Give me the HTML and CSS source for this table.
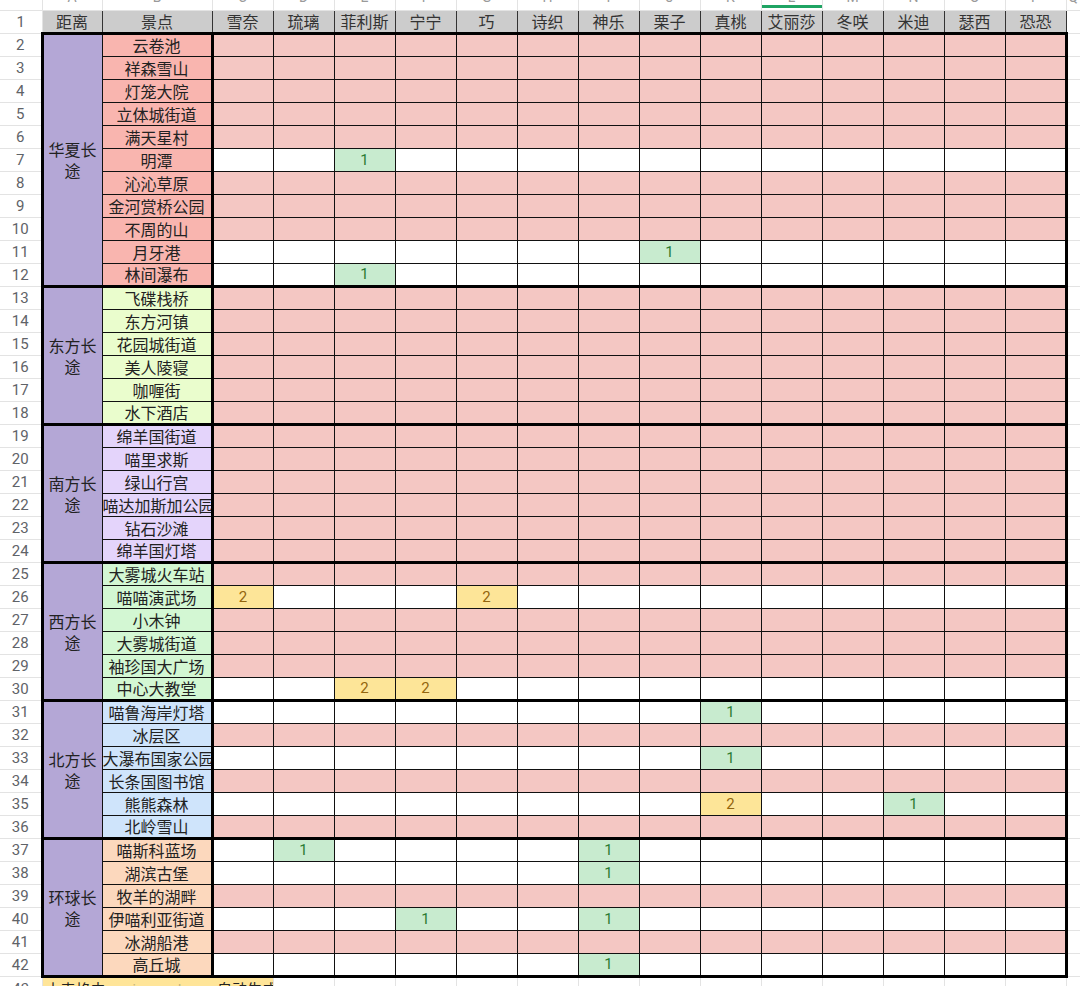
FILE: index.html
```html
<!DOCTYPE html>
<html lang="zh">
<head>
<meta charset="utf-8">
<title>长途景点表</title>
<link rel="stylesheet" href="styles.css">
</head>
<body>
<table class="sheet">
<colgroup>
<col class="w-rn"><col class="w-a"><col class="w-b">
<col class="w-d"><col class="w-d"><col class="w-d"><col class="w-d"><col class="w-d"><col class="w-d"><col class="w-d">
<col class="w-d"><col class="w-d"><col class="w-d"><col class="w-d"><col class="w-d"><col class="w-d"><col class="w-d">
<col class="w-f">
</colgroup>
<tr class="lt"><th></th><th><span>A</span></th><th><span>B</span></th><th><span>C</span></th><th><span>D</span></th><th><span>E</span></th><th><span>F</span></th><th><span>G</span></th><th><span>H</span></th><th><span>I</span></th><th><span>J</span></th><th><span>K</span></th><th class="sel"><span>L</span></th><th><span>M</span></th><th><span>N</span></th><th><span>O</span></th><th><span>P</span></th><th><span>Q</span></th></tr>
<tr class="hd"><th>1</th><td>距离</td><td>景点</td><td>雪奈</td><td>琉璃</td><td>菲利斯</td><td>宁宁</td><td>巧</td><td>诗织</td><td>神乐</td><td>栗子</td><td>真桃</td><td>艾丽莎</td><td>冬咲</td><td>米迪</td><td>瑟西</td><td>恐恐</td><th class="f"></th></tr>

<tr class="p c1"><th>2</th><td class="cat" rowspan="11">华夏长途</td><td class="nm">云卷池</td><td></td><td></td><td></td><td></td><td></td><td></td><td></td><td></td><td></td><td></td><td></td><td></td><td></td><td></td><th class="f"></th></tr>
<tr class="p c1"><th>3</th><td class="nm">祥森雪山</td><td></td><td></td><td></td><td></td><td></td><td></td><td></td><td></td><td></td><td></td><td></td><td></td><td></td><td></td><th class="f"></th></tr>
<tr class="p c1"><th>4</th><td class="nm">灯笼大院</td><td></td><td></td><td></td><td></td><td></td><td></td><td></td><td></td><td></td><td></td><td></td><td></td><td></td><td></td><th class="f"></th></tr>
<tr class="p c1"><th>5</th><td class="nm">立体城街道</td><td></td><td></td><td></td><td></td><td></td><td></td><td></td><td></td><td></td><td></td><td></td><td></td><td></td><td></td><th class="f"></th></tr>
<tr class="p c1"><th>6</th><td class="nm">满天星村</td><td></td><td></td><td></td><td></td><td></td><td></td><td></td><td></td><td></td><td></td><td></td><td></td><td></td><td></td><th class="f"></th></tr>
<tr class="w c1"><th>7</th><td class="nm">明潭</td><td></td><td></td><td class="g">1</td><td></td><td></td><td></td><td></td><td></td><td></td><td></td><td></td><td></td><td></td><td></td><th class="f"></th></tr>
<tr class="p c1"><th>8</th><td class="nm">沁沁草原</td><td></td><td></td><td></td><td></td><td></td><td></td><td></td><td></td><td></td><td></td><td></td><td></td><td></td><td></td><th class="f"></th></tr>
<tr class="p c1"><th>9</th><td class="nm">金河赏桥公园</td><td></td><td></td><td></td><td></td><td></td><td></td><td></td><td></td><td></td><td></td><td></td><td></td><td></td><td></td><th class="f"></th></tr>
<tr class="p c1"><th>10</th><td class="nm">不周的山</td><td></td><td></td><td></td><td></td><td></td><td></td><td></td><td></td><td></td><td></td><td></td><td></td><td></td><td></td><th class="f"></th></tr>
<tr class="w c1"><th>11</th><td class="nm">月牙港</td><td></td><td></td><td></td><td></td><td></td><td></td><td></td><td class="g">1</td><td></td><td></td><td></td><td></td><td></td><td></td><th class="f"></th></tr>
<tr class="w c1"><th>12</th><td class="nm">林间瀑布</td><td></td><td></td><td class="g">1</td><td></td><td></td><td></td><td></td><td></td><td></td><td></td><td></td><td></td><td></td><td></td><th class="f"></th></tr>

<tr class="p c2 gs"><th>13</th><td class="cat" rowspan="6">东方长途</td><td class="nm">飞碟栈桥</td><td></td><td></td><td></td><td></td><td></td><td></td><td></td><td></td><td></td><td></td><td></td><td></td><td></td><td></td><th class="f"></th></tr>
<tr class="p c2"><th>14</th><td class="nm">东方河镇</td><td></td><td></td><td></td><td></td><td></td><td></td><td></td><td></td><td></td><td></td><td></td><td></td><td></td><td></td><th class="f"></th></tr>
<tr class="p c2"><th>15</th><td class="nm">花园城街道</td><td></td><td></td><td></td><td></td><td></td><td></td><td></td><td></td><td></td><td></td><td></td><td></td><td></td><td></td><th class="f"></th></tr>
<tr class="p c2"><th>16</th><td class="nm">美人陵寝</td><td></td><td></td><td></td><td></td><td></td><td></td><td></td><td></td><td></td><td></td><td></td><td></td><td></td><td></td><th class="f"></th></tr>
<tr class="p c2"><th>17</th><td class="nm">咖喱街</td><td></td><td></td><td></td><td></td><td></td><td></td><td></td><td></td><td></td><td></td><td></td><td></td><td></td><td></td><th class="f"></th></tr>
<tr class="p c2"><th>18</th><td class="nm">水下酒店</td><td></td><td></td><td></td><td></td><td></td><td></td><td></td><td></td><td></td><td></td><td></td><td></td><td></td><td></td><th class="f"></th></tr>

<tr class="p c3 gs"><th>19</th><td class="cat" rowspan="6">南方长途</td><td class="nm">绵羊国街道</td><td></td><td></td><td></td><td></td><td></td><td></td><td></td><td></td><td></td><td></td><td></td><td></td><td></td><td></td><th class="f"></th></tr>
<tr class="p c3"><th>20</th><td class="nm">喵里求斯</td><td></td><td></td><td></td><td></td><td></td><td></td><td></td><td></td><td></td><td></td><td></td><td></td><td></td><td></td><th class="f"></th></tr>
<tr class="p c3"><th>21</th><td class="nm">绿山行宫</td><td></td><td></td><td></td><td></td><td></td><td></td><td></td><td></td><td></td><td></td><td></td><td></td><td></td><td></td><th class="f"></th></tr>
<tr class="p c3"><th>22</th><td class="nm">喵达加斯加公园</td><td></td><td></td><td></td><td></td><td></td><td></td><td></td><td></td><td></td><td></td><td></td><td></td><td></td><td></td><th class="f"></th></tr>
<tr class="p c3"><th>23</th><td class="nm">钻石沙滩</td><td></td><td></td><td></td><td></td><td></td><td></td><td></td><td></td><td></td><td></td><td></td><td></td><td></td><td></td><th class="f"></th></tr>
<tr class="p c3"><th>24</th><td class="nm">绵羊国灯塔</td><td></td><td></td><td></td><td></td><td></td><td></td><td></td><td></td><td></td><td></td><td></td><td></td><td></td><td></td><th class="f"></th></tr>

<tr class="p c4 gs"><th>25</th><td class="cat" rowspan="6">西方长途</td><td class="nm">大雾城火车站</td><td></td><td></td><td></td><td></td><td></td><td></td><td></td><td></td><td></td><td></td><td></td><td></td><td></td><td></td><th class="f"></th></tr>
<tr class="w c4"><th>26</th><td class="nm">喵喵演武场</td><td class="y">2</td><td></td><td></td><td></td><td class="y">2</td><td></td><td></td><td></td><td></td><td></td><td></td><td></td><td></td><td></td><th class="f"></th></tr>
<tr class="p c4"><th>27</th><td class="nm">小木钟</td><td></td><td></td><td></td><td></td><td></td><td></td><td></td><td></td><td></td><td></td><td></td><td></td><td></td><td></td><th class="f"></th></tr>
<tr class="p c4"><th>28</th><td class="nm">大雾城街道</td><td></td><td></td><td></td><td></td><td></td><td></td><td></td><td></td><td></td><td></td><td></td><td></td><td></td><td></td><th class="f"></th></tr>
<tr class="p c4"><th>29</th><td class="nm">袖珍国大广场</td><td></td><td></td><td></td><td></td><td></td><td></td><td></td><td></td><td></td><td></td><td></td><td></td><td></td><td></td><th class="f"></th></tr>
<tr class="w c4"><th>30</th><td class="nm">中心大教堂</td><td></td><td></td><td class="y">2</td><td class="y">2</td><td></td><td></td><td></td><td></td><td></td><td></td><td></td><td></td><td></td><td></td><th class="f"></th></tr>

<tr class="w c5 gs"><th>31</th><td class="cat" rowspan="6">北方长途</td><td class="nm">喵鲁海岸灯塔</td><td></td><td></td><td></td><td></td><td></td><td></td><td></td><td></td><td class="g">1</td><td></td><td></td><td></td><td></td><td></td><th class="f"></th></tr>
<tr class="p c5"><th>32</th><td class="nm">冰层区</td><td></td><td></td><td></td><td></td><td></td><td></td><td></td><td></td><td></td><td></td><td></td><td></td><td></td><td></td><th class="f"></th></tr>
<tr class="w c5"><th>33</th><td class="nm">大瀑布国家公园</td><td></td><td></td><td></td><td></td><td></td><td></td><td></td><td></td><td class="g">1</td><td></td><td></td><td></td><td></td><td></td><th class="f"></th></tr>
<tr class="p c5"><th>34</th><td class="nm">长条国图书馆</td><td></td><td></td><td></td><td></td><td></td><td></td><td></td><td></td><td></td><td></td><td></td><td></td><td></td><td></td><th class="f"></th></tr>
<tr class="w c5"><th>35</th><td class="nm">熊熊森林</td><td></td><td></td><td></td><td></td><td></td><td></td><td></td><td></td><td class="y">2</td><td></td><td></td><td class="g">1</td><td></td><td></td><th class="f"></th></tr>
<tr class="p c5"><th>36</th><td class="nm">北岭雪山</td><td></td><td></td><td></td><td></td><td></td><td></td><td></td><td></td><td></td><td></td><td></td><td></td><td></td><td></td><th class="f"></th></tr>

<tr class="w c6 gs"><th>37</th><td class="cat" rowspan="6">环球长途</td><td class="nm">喵斯科蓝场</td><td></td><td class="g">1</td><td></td><td></td><td></td><td></td><td class="g">1</td><td></td><td></td><td></td><td></td><td></td><td></td><td></td><th class="f"></th></tr>
<tr class="w c6"><th>38</th><td class="nm">湖滨古堡</td><td></td><td></td><td></td><td></td><td></td><td></td><td class="g">1</td><td></td><td></td><td></td><td></td><td></td><td></td><td></td><th class="f"></th></tr>
<tr class="p c6"><th>39</th><td class="nm">牧羊的湖畔</td><td></td><td></td><td></td><td></td><td></td><td></td><td></td><td></td><td></td><td></td><td></td><td></td><td></td><td></td><th class="f"></th></tr>
<tr class="w c6"><th>40</th><td class="nm">伊喵利亚街道</td><td></td><td></td><td></td><td class="g">1</td><td></td><td></td><td class="g">1</td><td></td><td></td><td></td><td></td><td></td><td></td><td></td><th class="f"></th></tr>
<tr class="p c6"><th>41</th><td class="nm">冰湖船港</td><td></td><td></td><td></td><td></td><td></td><td></td><td></td><td></td><td></td><td></td><td></td><td></td><td></td><td></td><th class="f"></th></tr>
<tr class="w c6 last"><th>42</th><td class="nm">高丘城</td><td></td><td></td><td></td><td></td><td></td><td></td><td class="g">1</td><td></td><td></td><td></td><td></td><td></td><td></td><td></td><th class="f"></th></tr>

<tr class="ft"><th>43</th><td class="note" colspan="3">本表格由<span class="link">semiosearch.com</span>自动生成</td><td></td><td></td><td></td><td></td><td></td><td></td><td></td><td></td><td></td><td></td><td></td><td></td><td></td><th class="f"></th></tr>
</table>
</body>
</html>
```

FILE: styles.css
```css
html, body {
  margin: 0;
  padding: 0;
  background: #ffffff;
}

body {
  width: 1080px;
  height: 986px;
  overflow: hidden;
  font-family: "Noto Sans CJK SC", "Noto Sans", sans-serif;
  color: #222222;
}

.sheet {
  border-collapse: collapse;
  table-layout: fixed;
  width: 1080px;
}

.w-rn { width: 42px; }
.w-a { width: 60px; }
.w-b { width: 110px; }
.w-d { width: 61px; }
.w-f { width: 14px; }

.sheet tr { height: 23px; }

.sheet th,
.sheet td {
  padding: 0;
  overflow: hidden;
  white-space: nowrap;
  text-align: center;
  vertical-align: middle;
  font-weight: normal;
  font-size: 16px;
  line-height: 21px;
}

.sheet th {
  font-family: Roboto, "Liberation Sans", sans-serif;
  font-size: 15px;
  color: #5f6368;
  border-bottom: 1px solid #e3e3e3;
  border-right: 1px solid #e3e3e3;
}

.sheet th.f {
  border-right: none;
}

.sheet tr.lt { height: 10px; }

.lt th {
  height: 10px;
  vertical-align: top;
  border-right: 1px solid #e3e3e3;
  border-bottom: 1px solid #e3e3e3;
  font-size: 14px;
  color: #9a9a9a;
}

.lt th span {
  display: block;
  height: 13px;
  margin-top: -3px;
  line-height: 0;
  overflow: hidden;
}

.lt th.sel {
  box-shadow: inset 0 -2px #ffffff, inset 0 -5px #1fa463;
}

.hd td {
  background: #cccccc;
  color: #333333;
  border-right: 1px solid #333333;
  border-bottom: 3px solid #000000;
}

.p td, .w td {
  border: 1px solid #111111;
}

.p td { background: #f4c7c3; }
.w td { background: #ffffff; }

.sheet td.g {
  background: #c8ebcf;
  color: #2a7b34;
  font-family: Roboto, "Liberation Sans", sans-serif;
  font-size: 15px;
}

.sheet td.y {
  background: #fde598;
  color: #93650e;
  font-family: Roboto, "Liberation Sans", sans-serif;
  font-size: 15px;
}

.sheet tr td.cat {
  background: #b4a7d6;
  white-space: normal;
  padding: 0 4px;
  border: 3px solid #000000;
  border-right: 1px solid #111111;
}

.sheet tr td.nm {
  border-right: 3px solid #000000;
  text-overflow: clip;
}

.c1 td.nm { background: #f9b5af; }
.c2 td.nm { background: #eafdcd; }
.c3 td.nm { background: #e4d4fb; }
.c4 td.nm { background: #d3f7d3; }
.c5 td.nm { background: #cfe4fb; }
.c6 td.nm { background: #fcd8bd; }

.p td:nth-last-child(2),
.w td:nth-last-child(2) {
  border-right: 3px solid #000000;
}

.gs td { border-top: 3px solid #000000; }
.last td { border-bottom: 3px solid #000000; }

.ft td {
  border-right: 1px solid #e3e3e3;
  border-bottom: 1px solid #e3e3e3;
}

.ft td.note {
  background: #ffe599;
  text-align: left;
  padding-left: 3px;
  font-size: 15px;
  color: #222222;
}

.note .link {
  font-family: Roboto, "Liberation Sans", sans-serif;
  font-size: 14px;
  color: #c4b27a;
}
```
